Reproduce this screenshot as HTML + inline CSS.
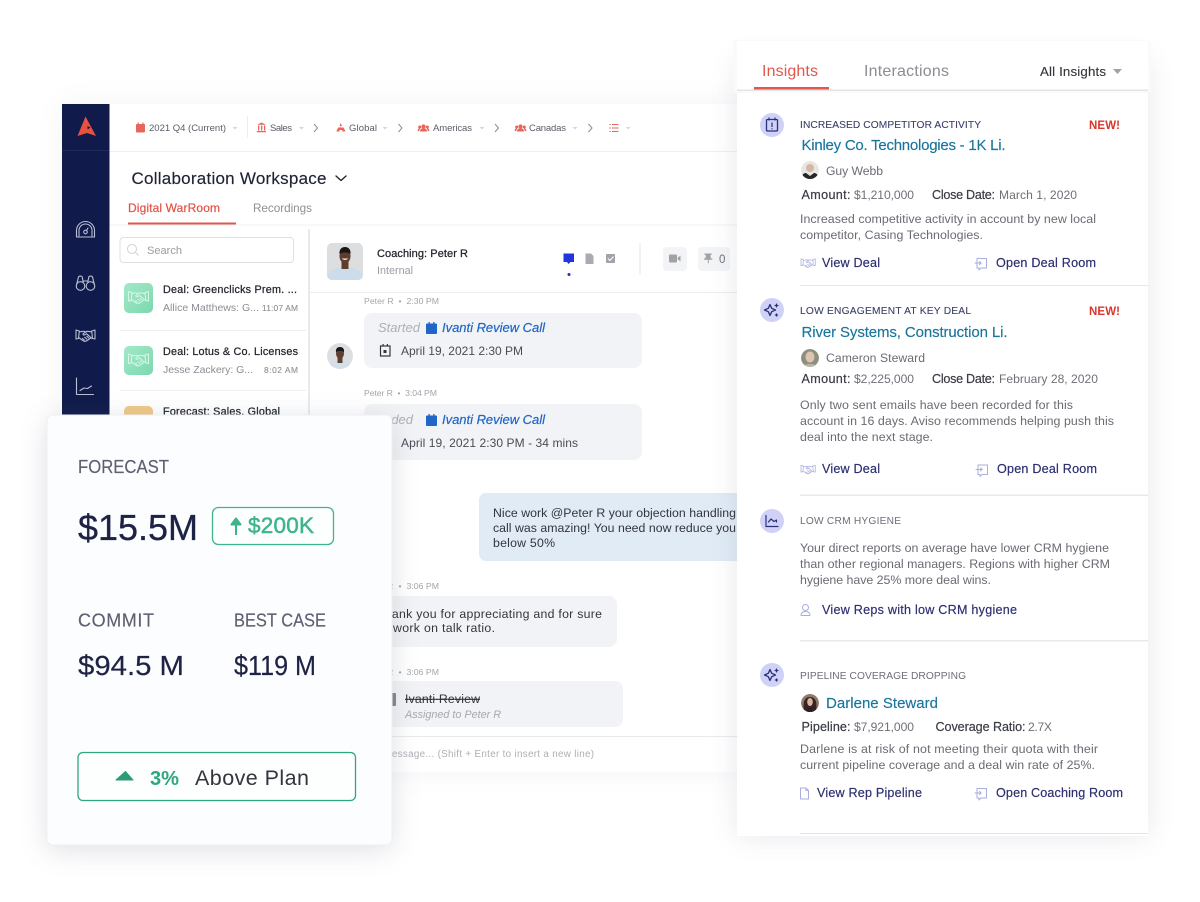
<!DOCTYPE html>
<html lang="en"><head><meta charset="utf-8"><title>Aviso Insights</title>
<style>
html,body{margin:0;padding:0;background:#fff;width:1200px;height:902px;overflow:hidden}
svg{display:block}
text{font-family:"Liberation Sans",sans-serif;white-space:pre}
.top{font-size:9.500px;fill:#5a5d68}
.car{fill:#d5d6da}
.chv{fill:none;stroke:#8a8c92;stroke-width:1}
.li1{font-size:10.800px;fill:#24262e;stroke:#24262e;stroke-width:.25px}
.li2{font-size:10.500px;fill:#8b8d93}
.li3{font-size:8.400px;fill:#8b8d93;stroke:#8b8d93;stroke-width:.1px}
.meta{font-size:8.700px;fill:#a3a5ab}
.ital{font-size:13px;font-style:italic;fill:#adafb5}
.call{font-size:13px;font-style:italic;fill:#1f66c8;stroke:#1f66c8;stroke-width:.2px}
.dt{font-size:12px;fill:#4a4c55}
.msg{font-size:12.300px;fill:#33353c}
.cap{font-size:10.200px;fill:#3d4068;stroke:#3d4068;stroke-width:.1px}
.capg{font-size:10.200px;fill:#6c6e78}
.new{font-size:11.500px;font-weight:bold;fill:#d9362d}
.ttl{font-size:15px;fill:#19759c;stroke:#19759c;stroke-width:.15px}
.nm{font-size:12.200px;fill:#6a6c74}
.lb{font-size:12.600px;fill:#3a3c44;stroke:#3a3c44;stroke-width:.2px}
.vl{font-size:12.100px;fill:#6e7077}
.ds{font-size:12.400px;fill:#696b73}
.lk{font-size:12.600px;fill:#2d2f70;stroke:#2d2f70;stroke-width:.18px}
.ic{fill:none;stroke:#a9addf;stroke-width:1;stroke-linecap:round;stroke-linejoin:round}
.side{fill:none;stroke:#b9bfd6;stroke-width:1.100;stroke-linecap:round;stroke-linejoin:round}
.fc{fill:#5d6070;stroke:#5d6070;stroke-width:.15px}
.big{fill:#1e2244;stroke:#1e2244;stroke-width:.2px}
</style></head><body>
<svg xmlns="http://www.w3.org/2000/svg" width="1200" height="902" viewBox="0 0 1200 902">
<defs>
<filter id="s1" x="-20%" y="-20%" width="140%" height="140%"><feGaussianBlur stdDeviation="14"/></filter>
<filter id="s2" x="-20%" y="-20%" width="140%" height="140%"><feGaussianBlur stdDeviation="14"/></filter>
<g id="hs"><path d="M0 0.500l3.300 1-.8 7.500L0 9.500zM19 0.500l-3.300 1 .8 7.500 2.500.5zM3.300 2.500c1.800-.4 3.300-1 5-.6l2 .7M15.700 2.500c-2-.4-3.400-1-5.200-.6L7.300 4c-.8.9.3 1.900 1.300 1.400l2-1.100 5 4.400M2.600 8l4.700 3.300c1 .7 2 .7 3 .2l4.200-2.700M6.500 9l1.800 1.500M8.800 7.800l2 1.800M10.800 6.800l2 1.700"/></g>
<g id="room"><path d="M2 2h9.500v9.500H6l-2 2v-2H2zM0 6.500h6M4.500 5l1.700 1.500-1.700 1.500"/></g>
<g id="spark"><path d="M-2 -5.500l1.700 3.800 3.800 1.700-3.800 1.700L-2 5.500l-1.700-3.800L-7.500 0l3.800-1.700z" fill="none" stroke="#2c3079" stroke-width="1.300" stroke-linejoin="round"/><path d="M4.500-7l.8 1.700L7-4.500l-1.700.8L4.500-2l-.8-1.700L2-4.500l1.700-.8zM4.500 3l.7 1.300 1.300.7-1.300.7-.7 1.300-.7-1.300L2.500 5l1.300-.7z" fill="#2c3079"/></g>
<g id="peo"><circle cx="0" cy="-1.500" r="2.100"/><circle cx="-3.800" cy="-1" r="1.500"/><circle cx="3.800" cy="-1" r="1.500"/><path d="M-3.500 3.500c0-2.400 1.600-3.300 3.500-3.300s3.500.9 3.500 3.300zM-5.800 3c0-2 .8-2.800 1.900-2.800l.8.2c-.7.6-1 1.500-1 2.600zM5.800 3c0-2-.8-2.800-1.900-2.800l-.8.2c.7.6 1 1.500 1 2.600z"/></g>
<clipPath id="cA"><rect x="327" y="243" width="36" height="37" rx="5"/></clipPath>
<clipPath id="cB"><circle cx="340" cy="356" r="13"/></clipPath>
<clipPath id="c1"><circle cx="810" cy="170" r="9"/></clipPath>
<clipPath id="c2"><circle cx="810" cy="358" r="9"/></clipPath>
<clipPath id="c3"><circle cx="810" cy="703" r="9"/></clipPath>
<clipPath id="win"><rect x="62" y="104" width="678" height="670"/></clipPath>
<linearGradient id="gr" x1="0" y1="0" x2="1" y2="1"><stop offset="0" stop-color="#a2e9c9"/><stop offset="1" stop-color="#7cd8ae"/></linearGradient>
</defs>

<!-- workspace window -->
<rect x="62" y="104" width="678" height="668" fill="#6a7085" opacity=".08" filter="url(#s1)"/>
<rect x="62" y="104" width="678" height="668" fill="#fff"/>
<g clip-path="url(#win)">
<rect x="62" y="104" width="47.500" height="312" fill="#101b4b"/>
<rect x="62" y="150" width="47.500" height="1" fill="#1f2a58"/>
<path d="M85.500 116.500L96 136l-9-3-9.500 3z" fill="#e8503f"/><path d="M87.500 126l3 1.500-3 2z" fill="#101b4b"/>

<!-- sidebar icons -->
<g class="side">
<path d="M76.500 237v-6.500a9 9 0 0 1 18 0v6.500z"/><path d="M79 236v-5.500a6.500 6.500 0 0 1 13 0v5.500"/><circle cx="85.500" cy="232" r="1.800"/><path d="M86.500 230.500l1.500-2.500"/>
<circle cx="80.500" cy="286" r="4.300"/><circle cx="90.500" cy="286" r="4.300"/><path d="M76.500 285l2-8c.4-1.300 3.300-1.300 3.700 0l1 5M94.500 285l-2-8c-.4-1.300-3.300-1.300-3.700 0l-1 5M83.200 281h4.600"/>
<use href="#hs" x="76" y="329.500"/>
<path d="M76.500 378v16.500h17M80 390.500l4-2.500 3.500.5 4-2.500"/>
</g>

<!-- top bar -->
<rect x="110" y="151" width="630" height="1" fill="#eeeff1"/>
<g fill="#e8655a"><rect x="136" y="124" width="9" height="8.500" rx="1"/><rect x="137.500" y="122.500" width="1.200" height="2"/><rect x="142.300" y="122.500" width="1.200" height="2"/>
<path d="M261.500 122.500l4.500 2.300h-9zM257 131h9v1.300h-9zM258 125.500h1.300v5H258zM261 125.500h1.300v5H261zM264 125.500h1.300v5H264z"/>
<path d="M340.500 123l1.600 3h-1v1.500h2.500l1.900 4h-3.200v-1.500h-2.800v1.500h-3.200l1.900-4h2.500V126h-1z"/>
<use href="#peo" x="423.500" y="128"/><use href="#peo" x="520.500" y="128"/>
<rect x="612" y="124" width="6.500" height="1"/><rect x="612" y="127.500" width="6.500" height="1"/><rect x="612" y="131" width="6.500" height="1"/><rect x="609.500" y="124" width="1.300" height="1"/><rect x="609.500" y="127.500" width="1.300" height="1"/><rect x="609.500" y="131" width="1.300" height="1"/></g>
<text class="top" x="149" y="131" textLength="77">2021 Q4 (Current)</text>
<text class="top" x="270" y="131" textLength="22">Sales</text>
<text class="top" x="349" y="131" textLength="28">Global</text>
<text class="top" x="433" y="131" textLength="39">Americas</text>
<text class="top" x="529" y="131" textLength="37">Canadas</text>
<g class="car"><path d="M232.500 127h5l-2.500 2.500zM299 127h5l-2.500 2.500zM382.500 127h5l-2.500 2.500zM479.500 127h5l-2.500 2.500zM572.500 127h5l-2.500 2.500zM626 127h4.500l-2.250 2.500z"/></g>
<rect x="247" y="116" width="1" height="22" fill="#eceded"/>
<path class="chv" d="M314 124l3.500 4-3.500 4M398.500 124l3.500 4-3.500 4M495 124l3.500 4-3.500 4M588.500 124l3.500 4-3.500 4"/>

<!-- title -->
<text x="131.500" y="184" font-size="17" textLength="195" fill="#1f2233" stroke="#1f2233" stroke-width=".15">Collaboration Workspace</text>
<path d="M336 176l5 4.500 5-4.500" fill="none" stroke="#23262f" stroke-width="1.400" stroke-linecap="round" stroke-linejoin="round"/>
<text x="128" y="212" font-size="12" textLength="92" fill="#e2574c" stroke="#e2574c" stroke-width=".25">Digital WarRoom</text>
<text x="253" y="212" font-size="11.700" textLength="59" fill="#8e9096">Recordings</text>
<rect x="110" y="224.500" width="630" height="1" fill="#f1f1f3"/>
<rect x="128" y="222.500" width="108" height="2" fill="#e2574c"/>

<!-- list -->
<rect x="120" y="237.500" width="173.500" height="25" rx="3.500" fill="#fff" stroke="#dfe0e3"/>
<circle cx="132" cy="249" r="4.500" fill="none" stroke="#d0d1d5"/><path d="M135.500 252.500l3 3" stroke="#d0d1d5"/>
<text x="147" y="254" font-size="11" textLength="35" fill="#a2a4a9" stroke="#a2a4a9" stroke-width=".1">Search</text>
<rect x="124" y="283" width="29" height="30" rx="5" fill="url(#gr)"/>
<use href="#hs" transform="translate(128.500 291) scale(1.050)" fill="none" stroke="#d8f5e8" stroke-width="1"/>
<text class="li1" x="163" y="293" textLength="134">Deal: Greenclicks Prem. ...</text>
<text class="li2" x="163" y="311" textLength="96">Allice Matthews: G...</text>
<text class="li3" x="262" y="311" textLength="36">11:07 AM</text>
<rect x="120" y="330" width="186" height="1" fill="#eeeff1"/>
<rect x="124" y="346" width="29" height="29" rx="5" fill="url(#gr)"/>
<use href="#hs" transform="translate(128.500 353.500) scale(1.050)" fill="none" stroke="#d8f5e8" stroke-width="1"/>
<text class="li1" x="163" y="355" textLength="135">Deal: Lotus &amp; Co. Licenses</text>
<text class="li2" x="163" y="373" textLength="90">Jesse Zackery: G...</text>
<text class="li3" x="264" y="373" textLength="34">8:02 AM</text>
<rect x="120" y="390" width="186" height="1" fill="#eeeff1"/>
<rect x="124" y="406" width="29" height="29" rx="5" fill="#efc98a"/>
<text class="li1" x="163" y="415" textLength="117">Forecast: Sales, Global</text>
<rect x="308" y="229" width="2" height="200" fill="#e9eaec"/>

<!-- chat header -->
<g clip-path="url(#cA)"><rect x="327" y="243" width="36" height="37" fill="#dcdee0"/><path d="M327 280c0-9 7-13 18-13s18 4 18 13z" fill="#cddcea"/><rect x="341.500" y="261" width="7" height="8" fill="#5f3d2d"/><ellipse cx="345" cy="256" rx="5.500" ry="7.500" fill="#5f3d2d"/><path d="M339.500 254c-.5-5 2.500-7 5.500-7s6 2 5.500 7c-2-2-9-2-11 0z" fill="#1a1616"/><path d="M341.500 258.500q3.500 3 7 0z" fill="#f0f0f0"/></g>
<text x="377" y="257" font-size="11" textLength="91" fill="#24262e" stroke="#24262e" stroke-width=".25">Coaching: Peter R</text>
<text x="377" y="274" font-size="10.800" textLength="36" fill="#9a9ca2">Internal</text>
<path d="M563.500 253.500h10.500v8.500h-3.500l-2 2-1.500-2h-3.500z" fill="#2234de"/><circle cx="569" cy="274.500" r="1.500" fill="#1f2fb8"/>
<path d="M585.500 253.500h5.500l2.500 2.500v8h-8z" fill="#a9abb1"/>
<rect x="606" y="254" width="9" height="9" rx="1" fill="#a1a3a9"/><path d="M608 258.500l2 2 3.500-4" fill="none" stroke="#fff" stroke-width="1"/>
<rect x="639.500" y="243" width="1" height="32" fill="#e2e3e6"/>
<rect x="663" y="247" width="24" height="24" rx="4" fill="#f3f4f6"/><rect x="698" y="247" width="32" height="24" rx="4" fill="#f3f4f6"/>
<rect x="669" y="254.500" width="8" height="8" rx="1" fill="#a0a2a8"/><path d="M677.500 258l3-2.500v6l-3-2.500z" fill="#a0a2a8"/>
<path d="M704.500 253.500h7v1.200l-1.200.8.700 3h1.300v1.300h-3.500v3.500h-1v-3.500H704v-1.300h1.300l.7-3-1.500-.8z" fill="#a0a2a8"/>
<text x="719" y="263" font-size="11.500" textLength="6.500" fill="#6e7077">0</text>
<rect x="310" y="292" width="430" height="1" fill="#eceded"/>

<!-- chat -->
<text class="meta" x="364" y="304" textLength="75">Peter R  •  2:30 PM</text>
<rect x="364" y="313" width="278" height="55" rx="8" fill="#f2f3f6"/>
<text class="ital" x="378" y="332" textLength="42">Started</text>
<rect x="426" y="323.500" width="11" height="10.500" rx="1" fill="#1f66c8"/><rect x="428.500" y="322" width="1.300" height="3" fill="#1f66c8"/><rect x="433.200" y="322" width="1.300" height="3" fill="#1f66c8"/>
<text class="call" x="442" y="332" textLength="103">Ivanti Review Call</text>
<rect x="380.500" y="346" width="9.500" height="10" fill="none" stroke="#33353c" stroke-width="1.200"/><rect x="382.500" y="344" width="1.200" height="2.500" fill="#33353c"/><rect x="386.800" y="344" width="1.200" height="2.500" fill="#33353c"/><rect x="383.500" y="350" width="3" height="3" fill="#33353c"/>
<text class="dt" x="401" y="355" textLength="122">April 19, 2021 2:30 PM</text>
<g clip-path="url(#cB)"><circle cx="340" cy="356" r="13" fill="#dcdfe2"/><path d="M327 369c1-6 6-8 13-8s12 2 13 8z" fill="#d3dfea"/><rect x="337.500" y="358" width="5" height="5" fill="#5f3f2f"/><ellipse cx="340" cy="353.500" rx="4" ry="5.500" fill="#5f3f2f"/><path d="M336 352c-.5-3.500 1.500-5 4-5s4.500 1.500 4 5c-2-1.500-6-1.500-8 0z" fill="#1a1616"/></g>
<text class="meta" x="364" y="396" textLength="73">Peter R  •  3:04 PM</text>
<rect x="364" y="404" width="278" height="56" rx="8" fill="#f2f3f6"/>
<text class="ital" x="375.500" y="424" textLength="37.500">Ended</text>
<rect x="426" y="415.500" width="11" height="10.500" rx="1" fill="#1f66c8"/><rect x="428.500" y="414" width="1.300" height="3" fill="#1f66c8"/><rect x="433.200" y="414" width="1.300" height="3" fill="#1f66c8"/>
<text class="call" x="442" y="424" textLength="103">Ivanti Review Call</text>
<text class="dt" x="401" y="447" textLength="177">April 19, 2021 2:30 PM - 34 mins</text>
<rect x="479" y="493" width="270" height="68" rx="7" fill="#e0ebf6"/>
<text class="msg" x="493" y="517" textLength="243">Nice work @Peter R your objection handling</text>
<text class="msg" x="493" y="532" textLength="243">call was amazing! You need now reduce you</text>
<text class="msg" x="493" y="547" textLength="62">below 50%</text>
<text class="meta" x="364" y="589" textLength="75">Peter R  •  3:06 PM</text>
<rect x="364" y="596" width="253" height="51" rx="8" fill="#f2f3f6"/>
<text class="msg" x="377" y="618" textLength="225">Thank you for appreciating and for sure</text>
<text class="msg" x="393" y="632" textLength="102">work on talk ratio.</text>
<text class="meta" x="364" y="675" textLength="75">Peter R  •  3:06 PM</text>
<rect x="364" y="681" width="259" height="46" rx="8" fill="#f2f3f6"/>
<rect x="389" y="693" width="7" height="13" rx="1" fill="#85878d"/>
<text x="405" y="703" font-size="12.300" textLength="75" fill="#33353c" text-decoration="line-through">Ivanti Review</text>
<text x="405" y="718" font-size="10.800" font-style="italic" textLength="96" fill="#a6a8ae">Assigned to Peter R</text>
<rect x="310" y="736" width="430" height="1" fill="#e9eaec"/>
<text x="349" y="757" font-size="9.800" textLength="245" fill="#adafb4">Type a message... (Shift + Enter to insert a new line)</text>
</g>

<!-- forecast card -->
<rect x="47" y="420" width="345" height="430" rx="8" fill="#5f6678" opacity=".2" filter="url(#s2)"/>
<rect x="47" y="415" width="345" height="430" rx="6" fill="#fcfdfe" stroke="#eeeff1"/>
<text class="fc" x="78" y="473" font-size="18" textLength="91" lengthAdjust="spacingAndGlyphs">FORECAST</text>
<text x="78" y="540" font-size="36" textLength="120" fill="#1e2244" stroke="#1e2244" stroke-width=".3">$15.5M</text>
<rect x="212.500" y="507.500" width="121" height="37" rx="6" fill="#fdfefe" stroke="#3fb58e" stroke-width="1.300"/>
<path d="M236 535v-14M231.500 524.500l4.500-6 4.500 6z" fill="#3db48e" stroke="#3db48e" stroke-width="2" stroke-linejoin="round"/>
<text x="248" y="533" font-size="22.500" textLength="66" fill="#3db48e" stroke="#3db48e" stroke-width=".5">$200K</text>
<text class="fc" x="78" y="626.500" font-size="18" textLength="76">COMMIT</text>
<text class="fc" x="234" y="626.500" font-size="18" textLength="92" lengthAdjust="spacingAndGlyphs">BEST CASE</text>
<text class="big" x="78" y="675" font-size="27.500" textLength="106" lengthAdjust="spacingAndGlyphs">$94.5 M</text>
<text class="big" x="234" y="675" font-size="27.500" textLength="82" lengthAdjust="spacingAndGlyphs">$119 M</text>
<rect x="78" y="752.500" width="277.500" height="48" rx="5" fill="#fdfefe" stroke="#2fa67e" stroke-width="1.300"/>
<path d="M125.500 771.500l7.500 8.500h-17z" fill="#2a9d74" stroke="#2a9d74" stroke-linejoin="round"/>
<text x="150" y="785" font-size="20.500" font-weight="bold" textLength="29" lengthAdjust="spacingAndGlyphs" fill="#2ea67f">3%</text>
<text x="195" y="785" font-size="21.500" textLength="114" fill="#33353c">Above Plan</text>

<!-- insights panel -->
<rect x="737" y="60" width="411" height="776" fill="#6a7085" opacity=".16" filter="url(#s1)"/>
<rect x="737" y="92" width="411" height="744" fill="#fff"/>
<rect x="733" y="40" width="418" height="53" rx="3" fill="#fafafb"/>
<rect x="737" y="41" width="411" height="49" rx="2" fill="#fff"/>
<rect x="737" y="89.500" width="411" height="1.500" fill="#e3e4e7"/>
<text x="762" y="76" font-size="16" textLength="56" fill="#e2574c">Insights</text>
<text x="864" y="76" font-size="16" textLength="85" fill="#8a8c92">Interactions</text>
<text x="1040" y="76" font-size="13.300" textLength="66" fill="#33353c" stroke="#33353c" stroke-width=".12">All Insights</text>
<path d="M1113 69h9l-4.500 5z" fill="#a0a2a8"/>
<rect x="754" y="87" width="75" height="2.500" fill="#e2574c"/>

<!-- item 1 -->
<circle cx="772" cy="125" r="12" fill="#cfd2f6"/>
<rect x="766.500" y="119.500" width="11" height="11.500" rx="1" fill="none" stroke="#2c3079" stroke-width="1.300"/><path d="M769 117.500v3M775 117.500v3M772 122.500v4.500M772 128.200v1" stroke="#2c3079" stroke-width="1.200" fill="none"/>
<text class="cap" x="800" y="128" textLength="181">INCREASED COMPETITOR ACTIVITY</text>
<text class="new" x="1089" y="129" textLength="31">NEW!</text>
<text class="ttl" x="801.500" y="150" textLength="204">Kinley Co. Technologies - 1K Li.</text>
<g clip-path="url(#c1)"><circle cx="810" cy="170" r="9" fill="#e8e5e2"/><circle cx="810" cy="168" r="4" fill="#d5b8a4"/><path d="M801 179c1-5 3-6 5-6l4 3 4-3c2 0 4 1 5 6z" fill="#26252a"/></g>
<text class="nm" x="826" y="175" textLength="57">Guy Webb</text>
<text class="lb" x="801.500" y="199" textLength="49">Amount:</text><text class="vl" x="854" y="199" textLength="60">$1,210,000</text>
<text class="lb" x="932" y="199" textLength="63">Close Date:</text><text class="vl" x="999" y="199" textLength="78">March 1, 2020</text>
<text class="ds" x="800" y="223" textLength="296">Increased competitive activity in account by new local</text>
<text class="ds" x="800" y="239" textLength="183">competitor, Casing Technologies.</text>
<use href="#hs" class="ic" transform="translate(801 258.500) scale(.75)"/>
<text class="lk" x="822" y="267" textLength="58">View Deal</text>
<use href="#room" class="ic" transform="translate(975 256.500)"/>
<text class="lk" x="996" y="267" textLength="100">Open Deal Room</text>
<rect x="800" y="285" width="348" height="1" fill="#e6e7ea"/>

<!-- item 2 -->
<circle cx="772" cy="310" r="12" fill="#cfd2f6"/><use href="#spark" x="772" y="310"/>
<text class="cap" x="800" y="314" textLength="171">LOW ENGAGEMENT AT KEY DEAL</text>
<text class="new" x="1089" y="315" textLength="31">NEW!</text>
<text class="ttl" x="801.500" y="337" textLength="206">River Systems, Construction Li.</text>
<g clip-path="url(#c2)"><circle cx="810" cy="358" r="9" fill="#8e8f7e"/><ellipse cx="810" cy="357" rx="4.500" ry="5.500" fill="#ddc5b2"/><path d="M802 368c1-3 4-4 8-4s7 1 8 4z" fill="#b9b7ac"/></g>
<text class="nm" x="826" y="362" textLength="99">Cameron Steward</text>
<text class="lb" x="801.500" y="383" textLength="49">Amount:</text><text class="vl" x="854" y="383" textLength="60">$2,225,000</text>
<text class="lb" x="932" y="383" textLength="63">Close Date:</text><text class="vl" x="999" y="383" textLength="99">February 28, 2020</text>
<text class="ds" x="800" y="409" textLength="273">Only two sent emails have been recorded for this</text>
<text class="ds" x="800" y="425" textLength="314">account in 16 days. Aviso recommends helping push this</text>
<text class="ds" x="800" y="441" textLength="133">deal into the next stage.</text>
<use href="#hs" class="ic" transform="translate(801 465) scale(.75)"/>
<text class="lk" x="822" y="473" textLength="58">View Deal</text>
<use href="#room" class="ic" transform="translate(976 463)"/>
<text class="lk" x="997" y="473" textLength="100">Open Deal Room</text>
<rect x="800" y="494.500" width="348" height="1.500" fill="#e8e9ec"/>

<!-- item 3 -->
<circle cx="772" cy="521" r="12" fill="#cfd2f6"/>
<path d="M766 515.500v11h12M768.500 522l2.500-3 3 2.500 2.500-1.500v2" fill="none" stroke="#2c3079" stroke-width="1.200" stroke-linejoin="round" stroke-linecap="round"/>
<text class="capg" x="800" y="524" textLength="101">LOW CRM HYGIENE</text>
<text class="ds" x="800" y="552" textLength="309">Your direct reports on average have lower CRM hygiene</text>
<text class="ds" x="800" y="568" textLength="310">than other regional managers. Regions with higher CRM</text>
<text class="ds" x="800" y="584" textLength="191">hygiene have 25% more deal wins.</text>
<circle cx="805.500" cy="607.500" r="3" class="ic"/><path class="ic" d="M801 615.500c0-3 2-4 4.500-4s4.500 1 4.500 4z"/>
<text class="lk" x="822" y="614" textLength="195">View Reps with low CRM hygiene</text>
<rect x="800" y="640" width="348" height="1.500" fill="#e8e9ec"/>

<!-- item 4 -->
<circle cx="772" cy="675" r="12" fill="#cfd2f6"/><use href="#spark" x="772" y="675"/>
<text class="capg" x="800" y="679" textLength="166">PIPELINE COVERAGE DROPPING</text>
<g clip-path="url(#c3)"><circle cx="810" cy="703" r="9" fill="#8e7a6c"/><path d="M804 712c-1-7-1-15 6-15s7 8 6 15z" fill="#3a2420"/><ellipse cx="810" cy="702" rx="2.800" ry="4" fill="#d9b6a1"/><path d="M806 712c0-3 2-4 4-4s4 1 4 4z" fill="#26202a"/></g>
<text class="ttl" x="826" y="708" textLength="112">Darlene Steward</text>
<text class="lb" x="801.500" y="731" textLength="49">Pipeline:</text><text class="vl" x="854" y="731" textLength="60">$7,921,000</text>
<text class="lb" x="935.500" y="731" textLength="90">Coverage Ratio:</text><text class="vl" x="1028" y="731" textLength="24">2.7X</text>
<text class="ds" x="800" y="753" textLength="298">Darlene is at risk of not meeting their quota with their</text>
<text class="ds" x="800" y="769" textLength="295">current pipeline coverage and a deal win rate of 25%.</text>
<path class="ic" d="M800.500 788h5.500l2.500 2.500v8.500h-8zM806 788v2.500h2.500"/>
<text class="lk" x="817" y="797" textLength="105">View Rep Pipeline</text>
<use href="#room" class="ic" transform="translate(975 786.500)"/>
<text class="lk" x="996" y="797" textLength="127">Open Coaching Room</text>
<rect x="800" y="833" width="348" height="1" fill="#e3e4e7"/>
</svg>
</body></html>
